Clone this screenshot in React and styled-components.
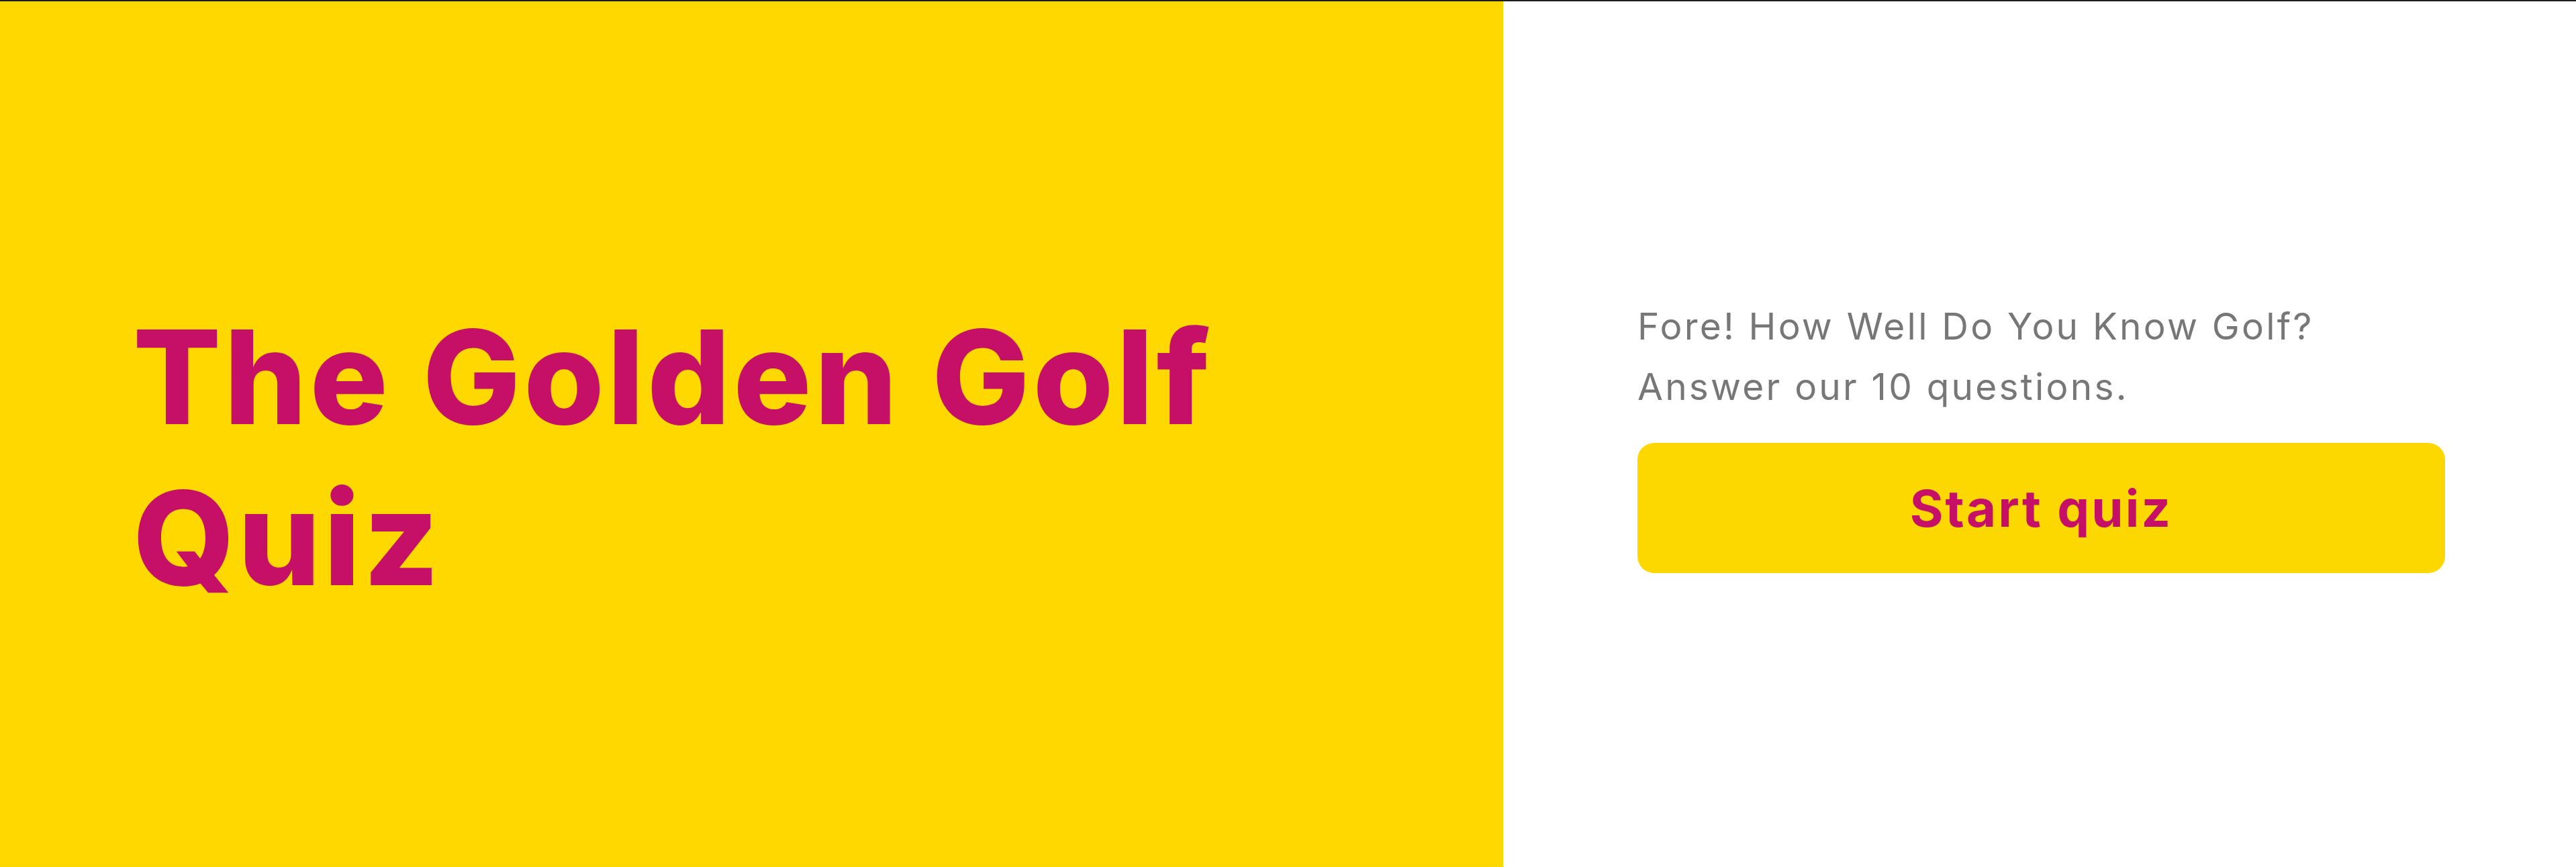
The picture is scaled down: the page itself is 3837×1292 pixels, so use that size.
import React from "react";
import styled, { createGlobalStyle } from "styled-components";

const Global = createGlobalStyle`
  * { box-sizing: border-box; }
  html, body { margin: 0; padding: 0; background: #ffffff; }
  body { font-family: Inter, "Noto Sans", sans-serif; }
`;

const Page = styled.main`
  display: grid;
  grid-template-columns: 2239px 1fr;
  height: 100vh;
  border-top: 2px solid #1c1c1c;
`;

const Hero = styled.section`
  background: #ffd800;
  display: flex;
  align-items: center;
  padding: 69px 150px 0 198px;
`;

const Title = styled.h1`
  margin: 0;
  font-family: Inter, "Noto Sans", sans-serif;
  font-weight: 800;
  font-size: 194px;
  line-height: 240px;
  color: #c60f66;
  letter-spacing: 4.5px;
`;

const Intro = styled.section`
  background: #ffffff;
  display: flex;
  flex-direction: column;
  justify-content: center;
  padding: 0 195px 0 200px;
`;

const Lead = styled.p`
  margin: 0 0 39px;
  font-family: Inter, "Noto Sans", sans-serif;
  font-weight: 400;
  font-size: 55px;
  line-height: 90px;
  letter-spacing: 3.2px;
  color: #777777;
`;

const StartButton = styled.button`
  display: flex;
  align-items: center;
  justify-content: center;
  width: 100%;
  height: 194px;
  border: none;
  border-radius: 25px;
  background: #fdd700;
  color: #c60f66;
  font-family: Inter, "Noto Sans", sans-serif;
  font-weight: 700;
  font-size: 76px;
  letter-spacing: 3.2px;
  cursor: pointer;
`;

export default function App() {
  return (
    <>
      <Global />
      <Page>
        <Hero>
          <Title>The Golden Golf Quiz</Title>
        </Hero>
        <Intro>
          <Lead>
            Fore! How Well Do You Know Golf?
            <br />
            Answer our 10 questions.
          </Lead>
          <StartButton>Start quiz</StartButton>
        </Intro>
      </Page>
    </>
  );
}
